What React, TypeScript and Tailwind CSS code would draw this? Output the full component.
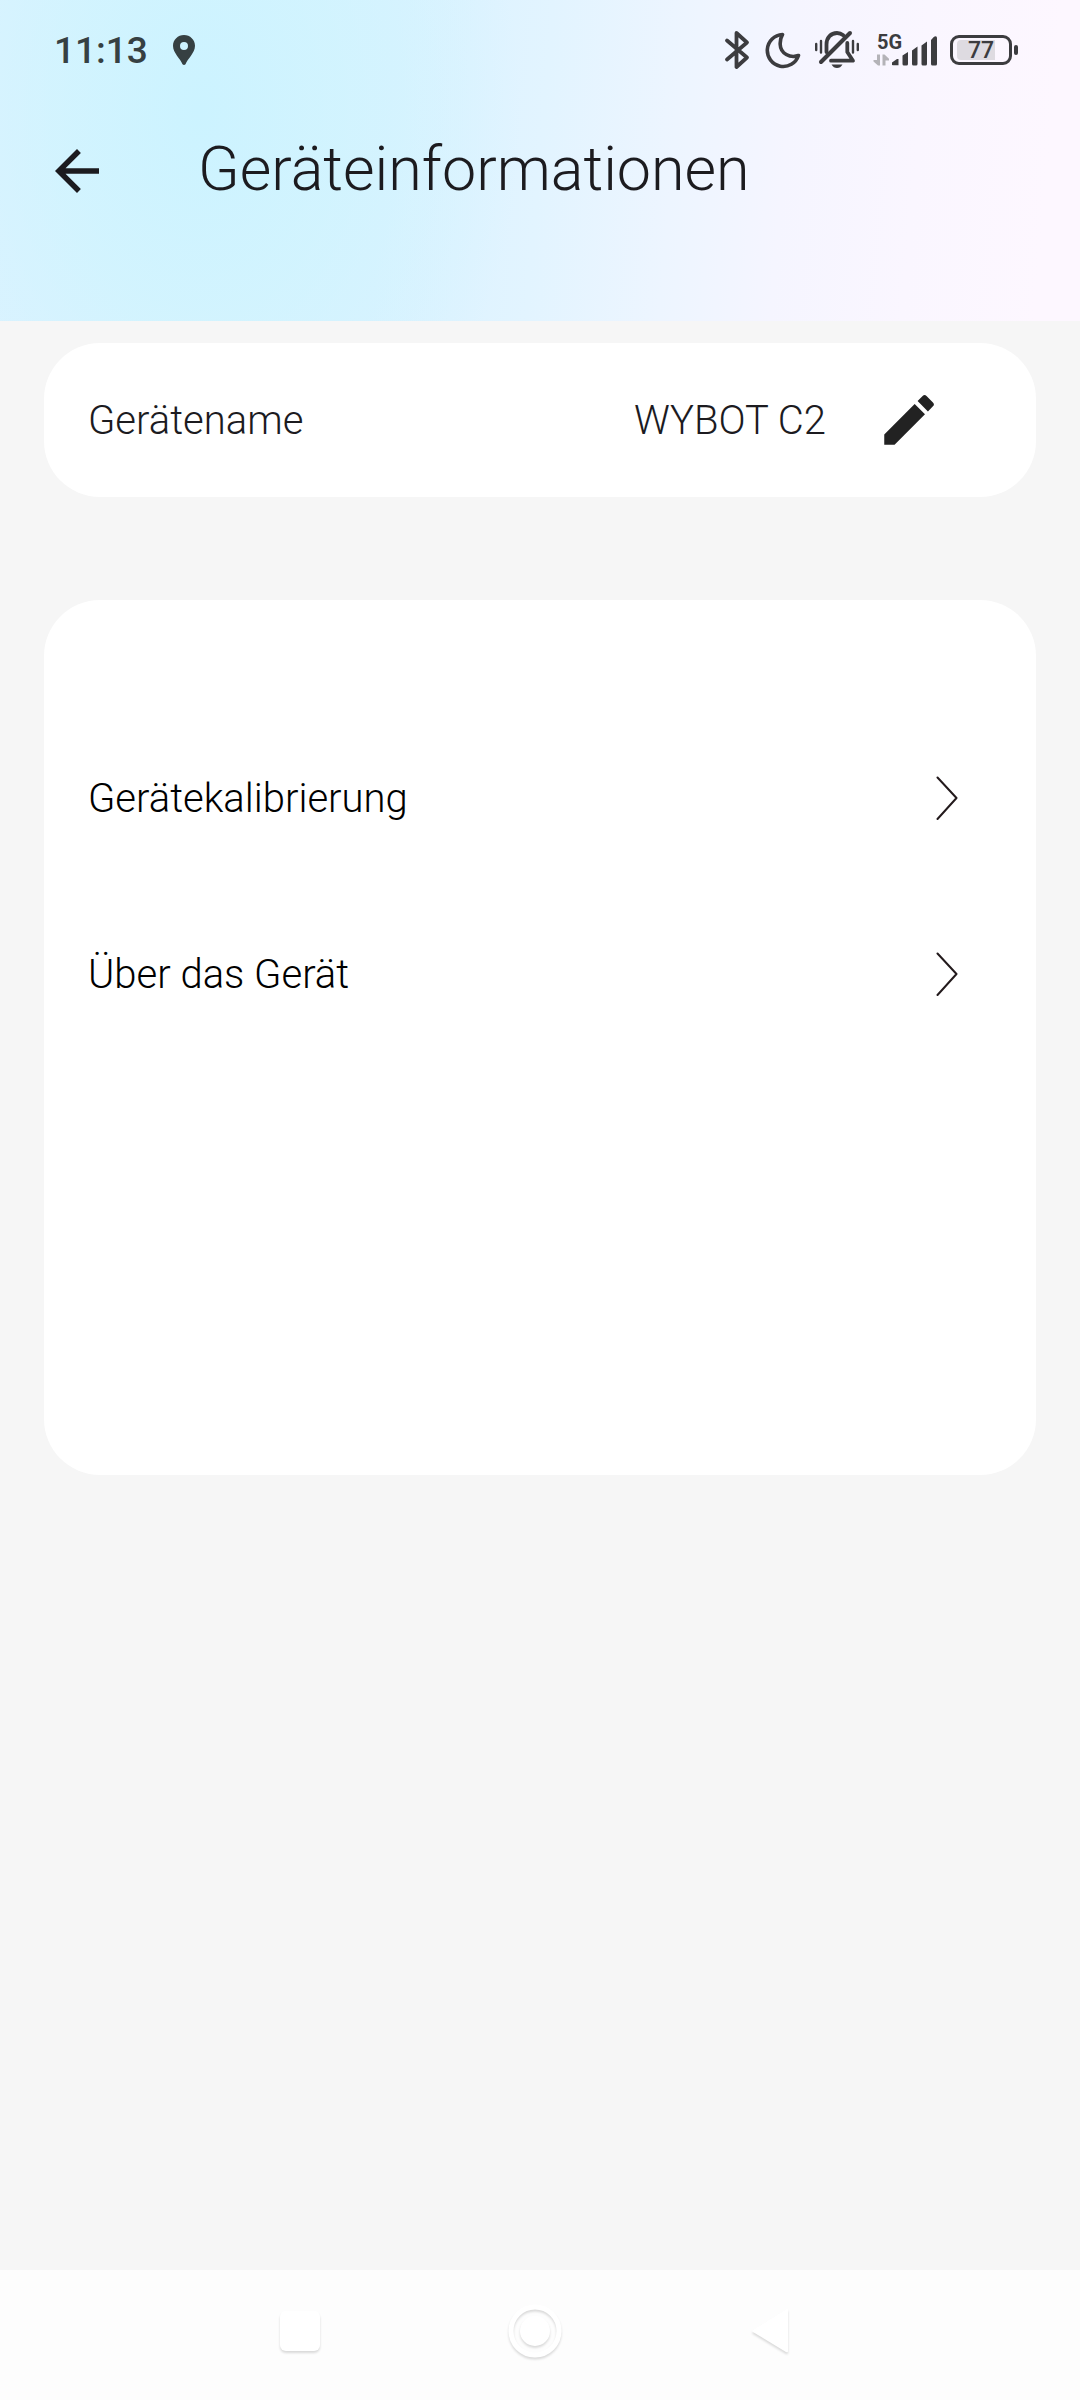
import React from "react"
import { MdArrowBack, MdEdit } from "react-icons/md"

const links = ["Gerätekalibrierung", "Über das Gerät"]

function StatusBar() {
    return (
        <div className="flex h-[100px] items-center justify-between pl-[54px] pr-[62px] text-[#3c3c3f]">
            <div className="flex items-center gap-[25px] text-[#364042]">
                <span className="pt-[2px] text-[37px] leading-[44px] font-medium">11:13</span>
                <svg width="22" height="30" viewBox="0 0 22 30" fill="currentColor">
                    <path fillRule="evenodd" d="M11 0C4.9 0 0 4.8 0 10.8 0 18 7.500 24 9.500 29.200Q11 30.800 12.500 29.200C14.500 24 22 18 22 10.800 22 4.800 17.100 0 11 0ZM11 7a4 4 0 1 0 0 8 4 4 0 0 0 0-8Z" />
                </svg>
            </div>


            <div className="flex items-center">
                <svg className="mr-[14px]" width="28" height="40" viewBox="0 0 28 40" fill="none" stroke="currentColor" strokeWidth="3.800" strokeLinecap="round" strokeLinejoin="round">
                    <path d="M4 10.500 24 27.500 13.500 37V3L24 12.500 4 29.500" />
                </svg>
                <svg className="mr-[14px]" width="36" height="38" viewBox="0 0 36 38" fill="none" stroke="currentColor" strokeWidth="3.600" strokeLinejoin="round">
                    <path d="M17.500 3.500A16 16 0 1 0 33.500 24.500C25 27.500 15.500 22.500 15.200 13.500 15 9.500 16 6 17.500 3.500Z" />
                </svg>
                <svg className="mr-[14px]" width="44" height="40" viewBox="0 0 44 40" fill="none" stroke="currentColor" strokeLinecap="round" strokeLinejoin="round">
                    <path strokeWidth="4" d="M6 32 35 3" />
                    <path strokeWidth="3.800" d="M11.500 22V14.500C11.500 7.500 16 3 22 3 24.500 3 26.500 3.800 28.300 5.200M32.300 13V22L38 30.700H16" />
                    <path strokeWidth="2.400" d="M1.200 14v6M6 11v11.500M42.800 14v6M38 11v11.500" />
                    <path fill="currentColor" stroke="none" d="M16.500 34.500H27.500C26 37 24.500 38 22 38S18 37 16.500 34.500Z" />
                </svg>
                <div className="relative mr-[13px]">
                    <svg width="64" height="34" viewBox="0 0 64 34" fill="currentColor">
                        <path d="M19 32V29.500L24 26H25.500V32.200H20Z" />
                        <path d="M29.500 22.500 35 19V31Q35 32.500 33.500 32.500H31Q29.500 32.500 29.500 31ZM39 17.500 44.500 13.500V31Q44.500 32.500 43 32.500H40.500Q39 32.500 39 31ZM48.500 12.500 54 8.500V31Q54 32.500 52.500 32.500H50Q48.500 32.500 48.500 31ZM58 7 61 3.800Q64 2.500 64 5V31Q64 32.500 62.500 32.500H59.500Q58 32.500 58 31Z" />
                        <path className="text-[#b4b3b8]" fill="currentColor" d="M4 21.500H7V32.500H5L.5 28.500V27H4ZM9.500 32.500V21.500H11.500L16 25.800V27.500H12.500V32.500Z" />
                    </svg>
                    <span className="absolute left-1 top-0 text-[20px] leading-[18px] font-bold">5G</span>
                </div>
                <div className="relative flex h-[30px] w-[62px] items-center justify-center rounded-[9px] border-[3px] border-current">
                    <div className="absolute left-1 top-[2px] h-5 w-[38px] rounded-l-[4px] bg-[#dedbe1]" />
                    <span className="relative pt-[2px] text-[23px] leading-[24px] font-medium">77</span>
                </div>
                <div className="ml-[2px] h-[10px] w-1 rounded-full bg-current" />
            </div>
        </div>
    )
}

function LinkRow({ label }: { label: string }) {
    return (
        <li>
            <a href="#" className="flex h-[176px] items-center justify-between pl-11 pr-[78px] text-black">
                <span className="pt-[2px]">{label}</span>
                <svg width="22" height="44" viewBox="0 0 22 44" fill="none" stroke="#231a1c" strokeWidth="2" strokeLinecap="round" strokeLinejoin="round">
                    <path d="M1.500 1.500 20.500 22 1.500 43" />
                </svg>
            </a>
        </li>
    )
}

function NavBar() {
    const button = "flex w-[235px] items-center justify-center"
    return (
        <nav className="flex h-[130px] justify-center bg-[#fdfdfd] pr-[10px] pb-[8px]">
            <button aria-label="Letzte Apps" className={button}>
                <span className="h-10 w-10 rounded-md bg-white drop-shadow-[0_2px_1px_rgba(0,0,0,0.14)]" />
            </button>
            <button aria-label="Startseite" className={button}>
                <svg className="drop-shadow-[0_2px_1px_rgba(0,0,0,0.14)]" width="54" height="54" viewBox="0 0 54 54">
                    <circle cx="27" cy="27" r="24" fill="none" stroke="#fff" strokeWidth="5" />
                    <circle cx="27" cy="27" r="15" fill="#fff" />
                </svg>
            </button>
            <button aria-label="Zurück" className={button}>
                <svg className="drop-shadow-[0_2px_1px_rgba(0,0,0,0.14)]" width="38" height="46" viewBox="0 0 38 46">
                    <path d="M2 22 36 1Q37 1 37 2V43Q37 45 35 44L2 24Q0 23 2 22Z" fill="#fff" />
                </svg>
            </button>
        </nav>
    )
}

export default function App() {
    return (
        <div className="flex min-h-screen flex-col bg-[#f6f6f6] font-['Roboto','Noto_Sans',sans-serif] text-[40px] leading-[48px] font-light text-[#1c1b1f]">
            <header className="h-[321px] bg-[radial-gradient(ellipse_320px_460px_at_200px_110px,#ccf3ff_0%,#cff4fec0_45%,#d8f3ff00_100%),linear-gradient(95deg,#ddf2ff_0%,#daf2ff_36%,#e2f4ff_50%,#edf5ff_62%,#f5f5ff_72%,#faf6ff_84%,#fdf7ff_96%)]">
                <StatusBar />
                <div className="flex h-[142px] items-center gap-[88px] pl-[44px]">
                    <button aria-label="Zurück">
                        <MdArrowBack size={66} />
                    </button>
                    <h1 className="pb-1 text-[61px] leading-[72px]">Geräteinformationen</h1>
                </div>
            </header>


            <main className="flex-1 px-11 pt-[22px]">
                <section className="flex h-[154px] items-center rounded-[56px] bg-white pl-11 pr-[94px]">
                    <span className="flex-1 pt-[2px]">Gerätename</span>
                    <span className="pt-[2px]">WYBOT C2</span>
                    <button aria-label="Gerätename bearbeiten" className="ml-[50px] text-[#222222]">
                        <MdEdit size={66} />
                    </button>
                </section>


                <ul className="mt-[103px] rounded-[56px] bg-white pt-[110px] pb-[413px]">
                    {links.map((label) => (
                        <LinkRow key={label} label={label} />
                    ))}
                </ul>
            </main>


            <NavBar />
        </div>
    )
}
